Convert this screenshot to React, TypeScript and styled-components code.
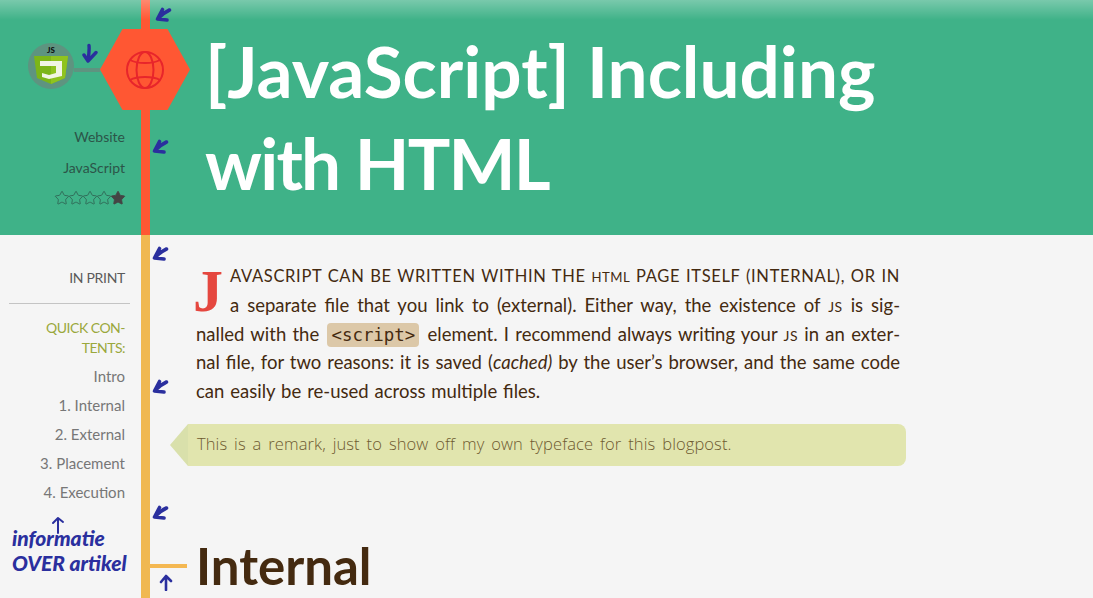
import React from "react";
import styled, { createGlobalStyle } from "styled-components";
import { Star } from "lucide-react";

const GlobalStyle = createGlobalStyle`
  html, body {
    margin: 0;
    padding: 0;
    background: #f5f5f5;
    overflow: hidden;
  }
`;

const Page = styled.div`
  position: relative;
  width: 1093px;
  height: 598px;
  overflow: hidden;
  font-family: "Lato", "Liberation Sans", sans-serif;
  background: #f5f5f5;
`;

const Header = styled.header`
  position: relative;
  display: grid;
  grid-template-columns: 141px 9px 1fr;
  height: 235px;
  background: #3fb288;
  &::after {
    content: "";
    position: absolute;
    left: 0;
    right: 0;
    top: 0;
    height: 20px;
    background: linear-gradient(rgba(255, 255, 255, 0.3), rgba(255, 255, 255, 0));
  }
`;

const Rail = styled.div<{ $color: string }>`
  background: ${(p) => p.$color};
`;

const HeadSide = styled.div`
  display: flex;
  flex-direction: column;
  align-items: flex-end;
  padding: 29px 16px 0 0;
`;

const LogoRow = styled.div`
  display: flex;
  align-items: center;
  align-self: flex-start;
  flex-shrink: 0;
  margin-left: 28px;
  margin-bottom: 11px;
  position: relative;
  z-index: 2;
`;

const JsBadge = styled.div`
  width: 46px;
  height: 46px;
  border-radius: 50%;
  background: #5e9480;
  display: flex;
  align-items: center;
  justify-content: center;
  flex-shrink: 0;
  align-self: flex-start;
  margin-top: 14px;
`;

const Connector = styled.div`
  width: 26px;
  height: 4px;
  background: #5e9480;
  flex-shrink: 0;
`;

const Hexagon = styled.div`
  width: 90px;
  height: 81px;
  flex-shrink: 0;
  background: #ff5733;
  clip-path: polygon(25% 0, 75% 0, 100% 50%, 75% 100%, 25% 100%, 0 50%);
  display: flex;
  align-items: center;
  justify-content: center;
`;

const MetaLine = styled.div`
  font-size: 14px;
  line-height: 31px;
  color: #2c5548;
  text-align: right;
`;

const Stars = styled.div`
  display: flex;
  height: 30px;
  align-items: center;
  color: #2f6453;
  svg {
    margin: 0 -1px;
  }
`;

const TitleCell = styled.div`
  padding: 25px 0 0 55px;
`;

const Title = styled.h1`
  margin: 0;
  width: 720px;
  font-family: "Lato", sans-serif;
  font-size: 71px;
  line-height: 92px;
  font-weight: 700;
  color: #fff;
`;

const TitleEnd = styled.span`
  letter-spacing: -1.8px;
`;

const Body = styled.div`
  display: grid;
  grid-template-columns: 141px 9px 1fr;
  height: 363px;
`;

const Side = styled.aside`
  padding: 31px 11px 0 9px;
  text-align: right;
  font-size: 15px;
  color: #777;
`;

const PrintLink = styled.div`
  font-size: 14px;
  letter-spacing: -0.3px;
  line-height: 24px;
  color: #5a5a5a;
  padding: 0 5px 13px 0;
  border-bottom: 1px solid #c4c4c4;
`;

const QuickTitle = styled.div`
  margin: 14px 5px 0 0;
  font-size: 14px;
  letter-spacing: -0.5px;
  line-height: 20px;
  color: #9aa83c;
`;

const TocList = styled.ul`
  list-style: none;
  margin: 4px 5px 0 0;
  padding: 0;
`;

const TocItem = styled.li`
  line-height: 29px;
`;

const Content = styled.main`
  padding: 27px 0 0 46px;
  width: 705px;
`;

const Para = styled.p`
  margin: 0;
  width: 704px;
  font-size: 18.5px;
  word-spacing: 1.2px;
  line-height: 28.8px;
  color: #442a10;
  text-align: justify;
  hyphens: manual;
  &::first-line {
    text-transform: uppercase;
    font-size: 16.5px;
    letter-spacing: 0.68px;
    word-spacing: 0;
  }
`;

const DropCap = styled.span`
  float: left;
  font-family: "Liberation Serif", serif;
  font-weight: 700;
  font-size: 60px;
  line-height: 50px;
  color: #e5473f;
  margin: 2px 7px 0 -3px;
  padding-top: 2px;
`;

const Abbr = styled.span<{ $size: number }>`
  text-transform: lowercase;
  font-variant: small-caps;
  font-size: ${(p) => p.$size}em;
  line-height: 1;
  letter-spacing: 0.5px;
`;

const Code = styled.code`
  font-family: "DejaVu Sans Mono", monospace;
  font-size: 17.4px;
  line-height: 1;
  background: #dcc8a8;
  border-radius: 4px;
  padding: 2px 4px;
  margin: 0 2px;
`;

const Remark = styled.div`
  position: relative;
  width: 718px;
  height: 42px;
  margin: 18px 0 0 -8px;
  padding-left: 9px;
  box-sizing: border-box;
  background: #e1e5ae;
  border-radius: 0 8px 8px 0;
  color: #6e5a30;
  font-family: "Open Sans", sans-serif;
  font-weight: 300;
  font-size: 16.5px;
  letter-spacing: 0.1px;
  word-spacing: 2.5px;
  line-height: 40px;
  &::before {
    content: "";
    position: absolute;
    left: -18px;
    top: 0;
    width: 18px;
    height: 42px;
    background: #d9e0ab;
    clip-path: polygon(100% 0, 100% 100%, 0 50%);
  }
`;

const SectionHeading = styled.h2`
  position: relative;
  margin: 70px 0 0 0;
  font-size: 51px;
  line-height: 60px;
  font-weight: 700;
  color: #442a10;
  &::before {
    content: "";
    position: absolute;
    left: -47px;
    top: 28px;
    width: 38px;
    height: 4px;
    background: #f4b852;
  }
`;

// handwritten notes that lie over the page
const Note = styled.div`
  position: absolute;
  left: 12px;
  top: 525px;
  font-family: "Lato", sans-serif;
  font-style: italic;
  font-weight: 900;
  font-size: 21px;
  line-height: 25px;
  color: #2a2f9e;
  white-space: nowrap;
`;

const Mark = styled.svg<{ $x: number; $y: number }>`
  position: absolute;
  left: ${(p) => p.$x}px;
  top: ${(p) => p.$y}px;
  z-index: 3;
  fill: none;
  stroke: #2a2f9e;
  stroke-linecap: round;
  stroke-linejoin: round;
`;

const HandArrow = ({ x, y }: { x: number; y: number }) => (
  <Mark $x={x} $y={y} width="17" height="15" viewBox="0 0 17 15" strokeWidth="3.6">
    <path d="M14.500 3 C10 5 7 7.500 3.500 11 M7.500 2.500 L2.500 12 L12 13" />
  </Mark>
);

const Globe = () => (
  <svg width="40" height="40" viewBox="0 0 40 40" fill="none" stroke="#e8252b" strokeWidth="2">
    <circle cx="20" cy="20" r="18" />
    <ellipse cx="20" cy="20" rx="8.5" ry="18" />
    <path d="M5 10 C12 14 28 14 35 10 M5 30 C12 26 28 26 35 30" />
  </svg>
);

const JsLogo = () => (
  <svg width="36" height="40" viewBox="0 0 36 40">
    <text x="18" y="7" textAnchor="middle" fontSize="8" fontWeight="900" fontFamily="Lato, sans-serif" fill="#111">
      JS
    </text>
    <path d="M1 10 H35 L32 32 L18 38 L4 32 Z" fill="#7cb518" />
    <path d="M18 10 H35 L32 32 L18 38 Z" fill="#8fc31f" />
    <path d="M7 15 H29 V30 L16 33 L9 31 V27 L16 29 L23 27 V20 H7 Z" fill="#f1f5e4" />
  </svg>
);

const tocItems = ["Intro", "1. Internal", "2. External", "3. Placement", "4. Execution"];
const downLeftArrows = [
  { x: 155, y: 7 },
  { x: 152, y: 139 },
  { x: 152, y: 246 },
  { x: 152, y: 379 },
  { x: 152, y: 505 },
];

export default function App() {
  return (
    <Page>
      <GlobalStyle />
      <Header>
        <HeadSide>
          <LogoRow>
            <JsBadge>
              <JsLogo />
            </JsBadge>
            <Connector />
            <Hexagon>
              <Globe />
            </Hexagon>
          </LogoRow>
          <MetaLine>Website</MetaLine>
          <MetaLine>JavaScript</MetaLine>
          <Stars>
            {[0, 1, 2, 3].map((i) => (
              <Star key={i} size={16} strokeWidth={1.3} />
            ))}
            <Star size={16} strokeWidth={1.3} fill="#444" color="#444" />
          </Stars>
        </HeadSide>
        <Rail $color="#ff5733" />
        <TitleCell>
          <Title>
            [JavaScript] Including <TitleEnd>with HTML</TitleEnd>
          </Title>
        </TitleCell>
      </Header>
      <Body>
        <Side>
          <PrintLink>IN PRINT</PrintLink>
          <QuickTitle>
            QUICK CON-
            <br />
            TENTS:
          </QuickTitle>
          <TocList>
            {tocItems.map((item) => (
              <TocItem key={item}>{item}</TocItem>
            ))}
          </TocList>
        </Side>
        <Rail $color="#f0b851" />
        <Content>
          <Para>
            <DropCap>J</DropCap>avascript can be written within the <Abbr $size={0.8}>html</Abbr> page itself
            (internal), or in a separate file that you link to (external). Either way, the existence of{" "}
            <Abbr $size={1.1}>js</Abbr> is sig&shy;nalled with the <Code>&lt;script&gt;</Code> element. I recommend
            always writing your <Abbr $size={1.1}>js</Abbr> in an exter&shy;nal file, for two reasons: it is saved (
            <em>cached)</em> by the user’s browser, and the same code can easily be re-used across multiple files.
          </Para>
          <Remark>This is a remark, just to show off my own typeface for this blogpost.</Remark>
          <SectionHeading>Internal</SectionHeading>
        </Content>
      </Body>
      {downLeftArrows.map((a) => (
        <HandArrow key={a.y} x={a.x} y={a.y} />
      ))}
      <Mark $x={81} $y={43} width="18" height="20" viewBox="0 0 18 20" strokeWidth="3.4">
        <path d="M8 2.500 C8.500 7 8 11 7 17 M3 12 L7 18 L15 9.500" />
      </Mark>
      <Mark $x={51} $y={516} width="14" height="18" viewBox="0 0 14 18" strokeWidth="2">
        <path d="M7 17 V3 M2 7 L7 2 L12 6" />
      </Mark>
      <Mark $x={159} $y={574} width="14" height="17" viewBox="0 0 14 17" strokeWidth="2.6">
        <path d="M7 16 V3 M2 8 L7 2 L12 7" />
      </Mark>
      <Note>
        informatie
        <br />
        OVER artikel
      </Note>
    </Page>
  );
}
